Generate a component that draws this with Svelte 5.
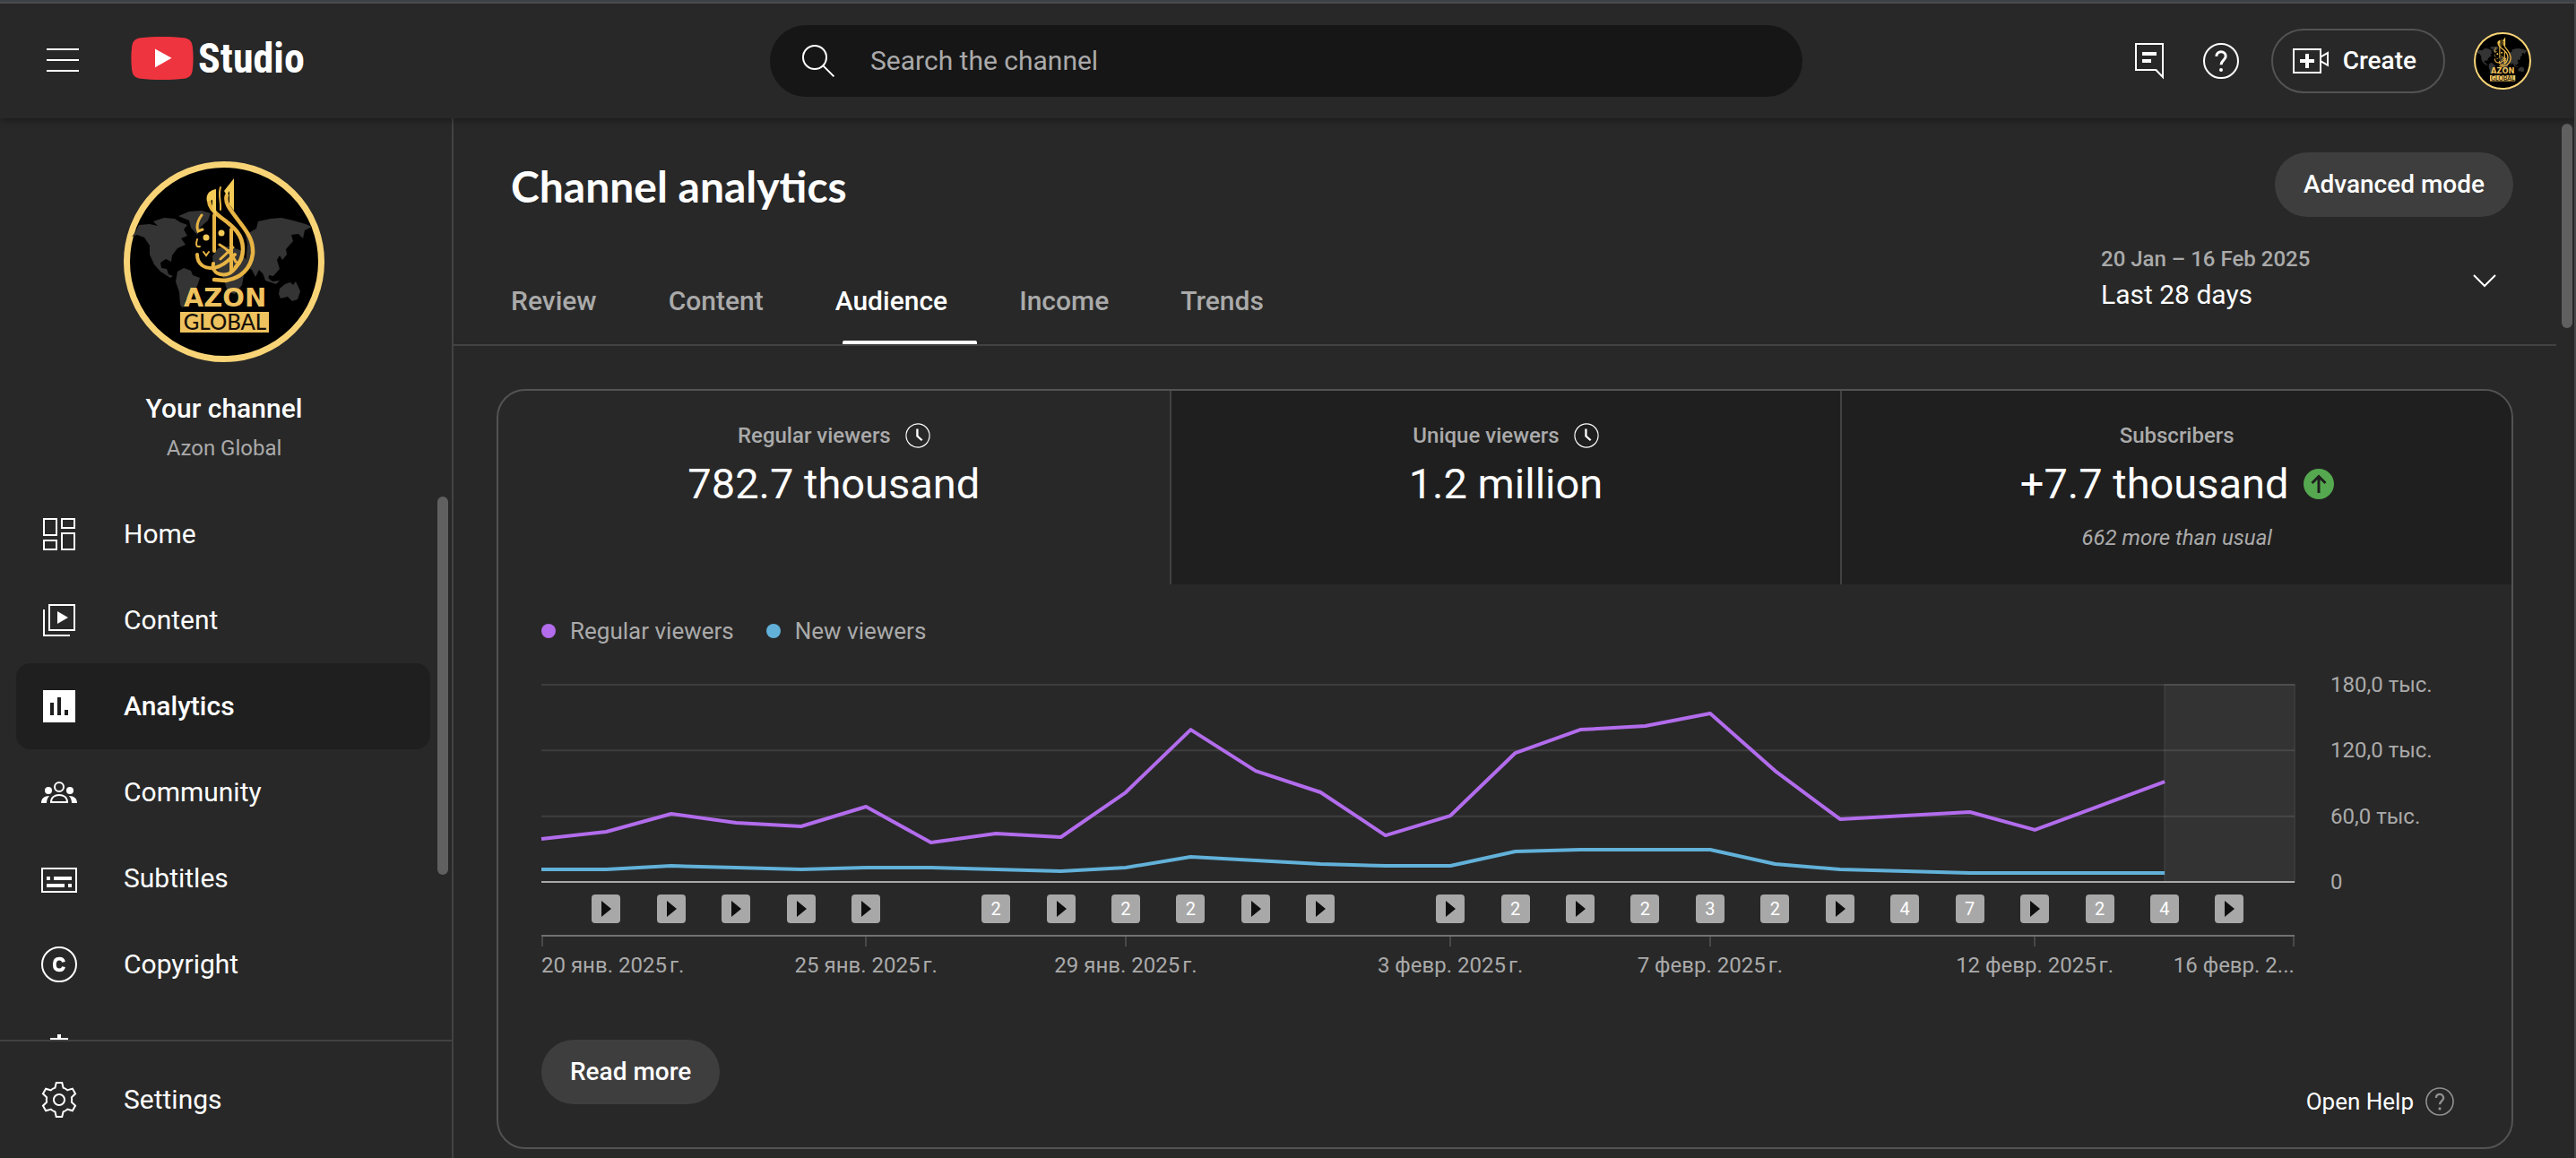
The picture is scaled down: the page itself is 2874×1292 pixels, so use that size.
<script>
  const nav = [
    { id: 'home', label: 'Home' },
    { id: 'content', label: 'Content' },
    { id: 'analytics', label: 'Analytics' },
    { id: 'community', label: 'Community' },
    { id: 'subtitles', label: 'Subtitles' },
    { id: 'copyright', label: 'Copyright' },
    { id: 'earn', label: '' },
  ];

  const tabs = ['Review', 'Content', 'Audience', 'Income', 'Trends'];

  const metrics = [
    { label: 'Regular viewers', value: '782.7 thousand', clock: true },
    { label: 'Unique viewers', value: '1.2 million', clock: true },
    { label: 'Subscribers', value: '+7.7 thousand', up: true, note: '662 more than usual' },
  ];

  // thousands of viewers per day, from 20 January
  const regular = [39.3, 45.8, 62.2, 54, 50.7, 68.7, 36, 44.2, 40.9, 81.8, 139, 101.4, 81.8, 42.5, 60.5, 117.8, 139, 142.4, 153.8, 101.4, 57.3, 60.5, 63.8, 47.5, 69.5, 91.6];
  const fresh = [11.5, 11.5, 14.7, 13.1, 11.5, 13.1, 13.1, 11.5, 9.8, 13.1, 22.9, 19.6, 16.4, 14.7, 14.7, 27.8, 29.5, 29.5, 29.5, 16.4, 11.5, 9.8, 8.2, 8.2, 8.2, 8.2];
  const line = (values) => values.map((v, i) => `${i},${180 - v}`).join(' ');

  // videos published per day
  const uploads = [0, 1, 1, 1, 1, 1, 0, 2, 1, 2, 2, 1, 1, 0, 1, 2, 1, 2, 3, 2, 1, 4, 7, 1, 2, 4, 1, 0];

  const dates = {
    0: '20 янв. 2025\u202Fг.',
    5: '25 янв. 2025\u202Fг.',
    9: '29 янв. 2025\u202Fг.',
    14: '3 февр. 2025\u202Fг.',
    18: '7 февр. 2025\u202Fг.',
    23: '12 февр. 2025\u202Fг.',
    27: '16 февр. 2...',
  };

  const scale = ['180,0 тыс.', '120,0 тыс.', '60,0 тыс.', '0'];
</script>

{#snippet avatar(cls)}
  <svg class={cls} viewBox="0 0 224 224" role="img" aria-label="Azon Global">
    <circle cx="112" cy="112" r="108.5" fill="#000" stroke="#f8d477" stroke-width="7" />
    <g fill="#343434">
      <path d="M13 79l4-8 12-1 9 2-5-5 12-4 12 1 6 4 8 3-4 5 4 7-7 3 5 7-9 4-6 8-1 7-6-3-6 4 1 6 6 1 2 6 5 2-3 2-11-7-7-8-5-11 0-10-6-9-8-3-6 2z" />
      <path d="M61 61l12-5 14-1 10 3-3 8-8 7-4 9-7-8-2-8z" />
      <path d="M60 123l7-4 8 3 2 5 8 3-3 9-6 8-7 7-3 10-3-4-1-14-4-12z" />
      <path d="M105 97l12-2 13 4 6 10 5 2-6 11-3 16-8 10-8-2-4-14-5-9-7-5-1-12z" />
      <path d="M138 92l-2-10 12-7 2-8 14-3 12-1 13 3 14 4 7 3-8 4-2 9-5-5-8 1 2 7-8 9 1 6-5 6-3-5-3 5 3 10-7 8-5-1-1 8-5-9-5-5-4 8-4-8-7-4z" />
      <path d="M155 124l6 6 5 4 8-1-4 4-12-4z" />
      <path d="M174 142l6-5 6-2 3 3 3-4 5 11-3 9-6 2-5-5-8 2-2-5z" />
    </g>
    <g fill="none" stroke="#e8b444" stroke-linecap="round">
      <path stroke-width="4.500" d="M96 40c-3 8 2 15 13 23 14 10 24 19 24 35 0 8-3 15-8 20" />
      <path stroke-width="4.500" d="M115 38c-3 9 5 17 13 28 9 12 17 21 16 37-2 17-14 28-31 30l-12-1" />
      <path stroke-width="4" d="M101 60v40M120 76v46" />
      <path stroke-width="3" d="M87 60c-5 7-6 13-4 18l5-2" />
      <path stroke-width="4" d="M82 104c0 11 8 16 19 15 10-2 16-9 23-15M100 114c-2 10 8 15 18 11 5-3 8-7 10-12" />
      <path stroke-width="3" d="M107 93c8 4 14 11 18 19M108 109l14-13" />
      <path stroke-width="2" d="M82 87c-2 6-1 9 3 8M89 101l3 4 3-4" />
      <path stroke-width="2" d="M108 29c-3 9 1 16 0 25" />
    </g>
    <path fill="#f3cb56" d="M112 33l11-14v36l-5-7V33l-3 5zM93 45c-2-8 3-13 10-14v30l-4-6V43z" />
    <g fill="#f3cb56"><circle cx="92" cy="85" r="3.5" /><circle cx="109" cy="80" r="3.5" /></g>
    <text class="az" x="113" y="162" text-anchor="middle">AZON</text>
    <rect x="63" y="168" width="99" height="23" fill="#eec25e" />
    <text class="gl" x="113" y="188" text-anchor="middle">GLOBAL</text>
  </svg>
{/snippet}

{#snippet icon(id)}
  <svg class="icon" viewBox="0 0 24 24" aria-hidden="true">
    {#if id === 'home'}
      <path class="s" d="M3.500 3.500h7v9h-7zM3.500 15.500h7v5h-7zM13.500 3.500h7v5h-7zM13.500 11.500h7v9h-7z" />
    {:else if id === 'content'}
      <path class="s" d="M6.500 3.500h14v14h-14zM3.500 6v14.500H18" /><path d="M11 7l6 3.500-6 3.500z" />
    {:else if id === 'analytics'}
      <path fill-rule="evenodd" d="M3 3h18v18H3zM7 10v7h2v-7zM11 7v10h2V7zM15 14v3h2v-3z" />
    {:else if id === 'community'}
      <circle class="s" cx="12" cy="9" r="2.500" /><circle cx="6" cy="11" r="2" /><circle cx="18" cy="11" r="2" />
      <path class="s" d="M7.500 17.500c0-2.600 2-4 4.500-4s4.500 1.400 4.500 4z" />
      <path d="M2 18c0-2.500 1.500-4 4.600-4C5.600 15 5 16.300 5 18zM22 18c0-2.500-1.500-4-4.600-4 1 1 1.600 2.300 1.600 4z" />
    {:else if id === 'subtitles'}
      <path class="s" d="M2.500 6.500h19v13h-19z" /><path d="M5 11h2v2H5zM9 11h10v2H9zM5 15h10v2H5zM17 15h2v2h-2z" />
    {:else if id === 'copyright'}
      <circle class="s" cx="12" cy="12" r="9.500" />
      <path fill="none" stroke="#fff" stroke-width="1.900" d="M14.500 10.700c-.2-1.200-1.100-1.900-2.400-1.900-1.700 0-2.700 1.200-2.700 3.200s1 3.200 2.700 3.200c1.300 0 2.200-.7 2.400-1.900" />
    {:else if id === 'earn'}
      <path d="M11 3h2v2h4v2H9v4h8v8h-4v2h-2v-2H7v-2h8v-4H7V5h4z" />
    {:else if id === 'settings'}
      <path d="M12 9.500c1.380 0 2.500 1.120 2.500 2.500s-1.120 2.500-2.500 2.500-2.500-1.120-2.500-2.500 1.120-2.500 2.500-2.500m0-1c-1.930 0-3.500 1.570-3.500 3.500s1.570 3.500 3.500 3.500 3.500-1.570 3.500-3.500-1.570-3.500-3.500-3.500zM13.220 3l.55 2.200.13.51.5.18c.61.23 1.190.56 1.720.98l.4.32.5-.14 2.170-.62 1.220 2.110-1.630 1.590-.37.36.08.51c.05.32.08.64.08.98s-.03.66-.08.98l-.08.51.37.36 1.630 1.590-1.220 2.110-2.170-.62-.5-.14-.4.32c-.53.43-1.110.76-1.720.98l-.5.18-.13.51-.55 2.240h-2.440l-.55-2.200-.13-.51-.5-.18c-.6-.23-1.180-.56-1.720-.99l-.4-.32-.5.14-2.170.62-1.210-2.120 1.630-1.590.37-.36-.08-.51c-.05-.32-.08-.65-.08-.98s.03-.66.08-.98l.08-.51-.37-.36L3.600 8.560l1.220-2.110 2.170.62.5.14.4-.32c.53-.44 1.110-.77 1.720-.99l.5-.18.13-.51.54-2.210h2.440M14 2h-4l-.74 2.960c-.73.27-1.400.66-2 1.140l-2.920-.83-2 3.460 2.190 2.130c-.06.37-.09.75-.09 1.140s.03.77.09 1.140l-2.190 2.130 2 3.460 2.920-.83c.6.48 1.270.87 2 1.140L10 22h4l.74-2.960c.73-.27 1.400-.66 2-1.140l2.920.83 2-3.460-2.190-2.130c.06-.37.09-.75.09-1.140s-.03-.77-.09-1.140l2.190-2.130-2-3.460-2.920.83c-.6-.48-1.270-.87-2-1.140L14 2z" />
    {:else if id === 'menu'}
      <path d="M3 5h18v1H3zM3 11h18v1H3zM3 17h18v1H3z" />
    {:else if id === 'search'}
      <circle class="s" cx="10" cy="10" r="6.500" /><path class="s" d="M14.700 14.700l6 6" />
    {:else if id === 'comment'}
      <path class="s" d="M4.500 2.500h15v18.500l-3.800-4H4.500z" /><path d="M8 7h8v2H8zM8 11h5v2H8z" />
    {:else if id === 'help'}
      <circle class="s" cx="12" cy="12" r="9.500" />
      <path fill="none" stroke="currentColor" stroke-width="1.500" d="M9.400 9.400c.1-1.500 1.200-2.500 2.600-2.500s2.600 1 2.600 2.500c0 2.100-2.500 2.300-2.600 4.700" />
      <circle cx="12" cy="17" r="1" />
    {:else if id === 'create'}
      <path class="s" d="M2.500 5.500h15v13h-15zM17.500 9.800l4-2.300v6.900l-4-2.300" /><path d="M9 8h2v3h3v2h-3v3H9v-3H6v-2h3z" />
    {:else if id === 'chevron'}
      <path class="s" d="M6 9l6 6 6-6" />
    {:else if id === 'clock'}
      <circle class="s" cx="12" cy="12" r="11.200" /><path fill="none" stroke="#fff" stroke-width="2" d="M11.500 5.500v7l4.500 4" />
    {/if}
  </svg>
{/snippet}

<div class="app">
  <header class="top">
    <div class="brand">
      <button class="plain" aria-label="Collapse menu">{@render icon('menu')}</button>
      <a class="logo" href="#studio">
        <svg class="mark" viewBox="0 0 70 48" aria-hidden="true">
          <path fill="#ee343f" d="M11 1.200C24-.4 46-.4 59 1.200c6 .7 9 3.500 9.800 9.500 1.100 8.600 1.100 18 0 26.600-.8 6-3.800 8.800-9.800 9.500-13 1.600-35 1.600-48 0-6-.7-9-3.500-9.800-9.500-1.100-8.600-1.100-18 0-26.600C2 4.700 5 1.900 11 1.200z" />
          <path fill="#fff" d="M27 13.500l18.500 10.300L27 34.200z" />
        </svg>
        <span>Studio</span>
      </a>
    </div>
    <label class="search">
      {@render icon('search')}
      <input type="search" placeholder="Search the channel" aria-label="Search the channel" />
    </label>
    <div class="actions">
      <button class="plain" aria-label="Feedback">{@render icon('comment')}</button>
      <button class="plain" aria-label="Help">{@render icon('help')}</button>
      <button class="create">{@render icon('create')}<span>Create</span></button>
      <button class="plain account" aria-label="Account">{@render avatar('small')}</button>
    </div>
  </header>

  <div class="body">
    <aside class="side">
      <div class="channel">
        {@render avatar('big')}
        <strong>Your channel</strong>
        <span>Azon Global</span>
      </div>
      <div class="scroller">
        <nav>
          {#each nav as item}
            <a class="item" class:active={item.id === 'analytics'} href="#{item.id}" aria-label={item.label || 'Earn'}>
              {@render icon(item.id)}<span>{item.label}</span>
            </a>
          {/each}
        </nav>
        <div class="thumb"></div>
      </div>
      <div class="bottom">
        <a class="item" href="#settings">{@render icon('settings')}<span>Settings</span></a>
      </div>
    </aside>

    <main>
      <section class="head">
        <div class="title">
          <h1>Channel analytics</h1>
          <button class="pill">Advanced mode</button>
        </div>
        <div class="bar">
          <nav class="tabs">
            {#each tabs as tab}
              <a class="tab" class:current={tab === 'Audience'} href="#{tab.toLowerCase()}">{tab}</a>
            {/each}
          </nav>
          <button class="period">
            <span class="range"><small>20 Jan – 16 Feb 2025</small><span>Last 28 days</span></span>
            {@render icon('chevron')}
          </button>
        </div>
      </section>

      <section class="card">
        <div class="metrics">
          {#each metrics as m, i}
            <button class="metric" class:selected={i === 0}>
              <span class="label">{m.label}{#if m.clock}{@render icon('clock')}{/if}</span>
              <span class="value">
                {m.value}
                {#if m.up}
                  <svg class="up" viewBox="0 0 34 34" aria-hidden="true">
                    <circle cx="17" cy="17" r="17" fill="#55a84f" />
                    <path fill="none" stroke="#1f1f1f" stroke-width="3" d="M17 27V9M9.500 16L17 8.500l7.500 7.500" />
                  </svg>
                {/if}
              </span>
              {#if m.note}<em>{m.note}</em>{/if}
            </button>
          {/each}
        </div>

        <div class="legend">
          <span class="key regular">Regular viewers</span>
          <span class="key fresh">New viewers</span>
        </div>

        <div class="chart">
          <svg class="plot" viewBox="0 0 27 180" preserveAspectRatio="none" role="img" aria-label="Viewers per day">
            <rect class="pending" x="25" y="0" width="2" height="180" />
            <path class="grid" d="M0 0H27M0 60H27M0 120H27" />
            <polyline class="regular" points={line(regular)} />
            <polyline class="fresh" points={line(fresh)} />
            <path class="base" d="M0 180H27" />
          </svg>
          <div class="scale">
            {#each scale as s}<span>{s}</span>{/each}
          </div>
          <div class="uploads">
            {#each uploads as n}
              <span class="mark-day" class:none={n === 0}>
                {#if n === 1}
                  <svg viewBox="0 0 32 32" role="img" aria-label="Video"><path d="M11 7l11 9-11 9z" /></svg>
                {:else if n > 1}{n}{/if}
              </span>
            {/each}
          </div>
          <div class="dates">
            {#each uploads as _, i}
              <span class="date">{#if dates[i]}<i></i><span>{dates[i]}</span>{/if}</span>
            {/each}
          </div>
        </div>

        <div class="foot">
          <button class="pill">Read more</button>
          <a class="help" href="#help">Open Help {@render icon('help')}</a>
        </div>
      </section>
      <div class="thumb page"></div>
    </main>
  </div>
</div>

<style>
  :global(body) { background: #282828; }
  .app {
    height: 100vh;
    box-sizing: border-box;
    display: flex;
    flex-direction: column;
    overflow: hidden;
    background: #282828;
    color: #fff;
    border-top: 2px solid #3c4149;
    border-right: 2px solid #48484a;
    font: 400 30px/40px Roboto, "Noto Sans", sans-serif;
  }
  button { border: 0; padding: 0; margin: 0; background: none; color: inherit; font: inherit; cursor: pointer; }
  a { color: inherit; text-decoration: none; }
  svg { display: block; flex: none; }
  .icon { width: 48px; height: 48px; fill: currentColor; }
  .s { fill: none; stroke: currentColor; stroke-width: 1; }
  .az { font: 700 29px "DejaVu Sans", sans-serif; fill: #efc25f; }
  .gl { font: 500 24px Lato, sans-serif; fill: #17100a; }

  .top {
    position: relative;
    z-index: 1;
    flex: none;
    box-sizing: border-box;
    height: 130px;
    padding: 0 48px 0 46px;
    border-top: 2px solid #4a4a4c;
    display: grid;
    grid-template-columns: 1fr minmax(0, 1152px) 1fr;
    align-items: center;
    box-shadow: 0 2px 8px rgba(0, 0, 0, 0.35);
    background: #282828;
  }
  .brand { display: flex; align-items: center; gap: 52px; }
  .logo { display: flex; align-items: center; gap: 5px; padding-bottom: 6px; font: 700 46px/48px "Liberation Sans Narrow", "Roboto Condensed", Roboto, sans-serif; }
  .mark { width: 70px; height: 48px; }
  .search {
    box-sizing: border-box;
    height: 80px;
    border-radius: 40px;
    padding: 0 40px 0 30px;
    display: flex;
    align-items: center;
    gap: 34px;
    background: #161616;
  }
  input { flex: 1; min-width: 0; border: 0; padding: 0; outline: 0; background: none; color: #fff; font: inherit; }
  input::placeholder { color: #aaa; opacity: 1; }
  .actions { display: flex; align-items: center; justify-content: flex-end; gap: 32px; }
  .create {
    box-sizing: border-box;
    height: 72px;
    padding: 0 30px 0 18px;
    border: 2px solid #535353;
    border-radius: 36px;
    display: flex;
    align-items: center;
    gap: 12px;
    font-size: 28px;
    font-weight: 500;
  }
  .small { width: 64px; height: 64px; }

  .body { flex: 1; min-height: 0; display: flex; }
  .side {
    flex: none;
    box-sizing: border-box;
    width: 506px;
    border-right: 2px solid #424242;
    display: flex;
    flex-direction: column;
  }
  .channel { padding: 48px 4px 28px 0; display: flex; flex-direction: column; align-items: center; }
  .big { width: 224px; height: 224px; }
  .channel strong { margin-top: 32px; font-weight: 500; }
  .channel span { margin-top: 4px; color: #aaa; font-size: 24px; }
  .scroller { position: relative; flex: 1; min-height: 0; overflow: hidden; }
  .scroller nav { padding-right: 24px; }
  .item { display: flex; align-items: center; gap: 48px; height: 96px; margin-left: 18px; padding-left: 24px; border-radius: 16px; }
  .item.active { background: #1f1f1f; font-weight: 500; }
  .thumb { position: absolute; top: 6px; right: 4px; width: 12px; height: 422px; border-radius: 6px; background: #606060; }
  .bottom { flex: none; height: 130px; border-top: 2px solid #424242; display: flex; align-items: center; }

  main { position: relative; flex: 1; min-width: 0; }
  .head { box-sizing: border-box; margin-right: 20px; padding: 38px 48px 0 64px; border-bottom: 2px solid #424242; }
  .title { display: flex; align-items: center; justify-content: space-between; }
  h1 { margin: 0; padding-top: 4px; font: 700 48px/64px Lato, "Open Sans", sans-serif; }
  .pill { height: 72px; padding: 0 32px; border-radius: 36px; background: #3e3e3e; font-size: 28px; font-weight: 500; }
  .bar { height: 142px; display: flex; justify-content: space-between; }
  .tabs { align-self: flex-end; display: flex; gap: 80px; }
  .tab { position: relative; height: 98px; line-height: 100px; font-weight: 500; color: #aaa; }
  .current { color: #fff; }
  .current::after { content: ""; position: absolute; left: 8px; bottom: 0; width: 150px; height: 4px; border-radius: 2px 2px 0 0; background: #fff; }
  .period { width: 460px; height: 142px; padding-right: 8px; display: flex; align-items: center; justify-content: space-between; text-align: left; }
  .range { display: flex; flex-direction: column; padding-bottom: 8px; }
  small { font-size: 24px; font-weight: 500; color: #aaa; }
  .page { right: 2px; top: 6px; height: 228px; }

  .card { box-sizing: border-box; margin: 48px 68px 0 48px; border: 2px solid #535353; border-radius: 32px; overflow: hidden; }
  .metrics { display: grid; grid-template-columns: repeat(3, 1fr); }
  .metric {
    box-sizing: border-box;
    height: 216px;
    padding-top: 30px;
    display: flex;
    flex-direction: column;
    align-items: center;
    background: #1f1f1f;
    border-left: 2px solid #424242;
  }
  .metric.selected { background: none; border-left: 0; }
  .label { display: flex; align-items: center; gap: 16px; color: #aaa; font-size: 24px; font-weight: 500; }
  .label :global(.icon) { width: 28px; height: 28px; color: #fff; }
  .value { display: flex; align-items: center; gap: 16px; font-size: 47px; line-height: 68px; }
  .up { width: 34px; height: 34px; }
  em { margin-top: 10px; color: #aaa; font-size: 24px; line-height: 32px; }

  .legend { display: flex; gap: 36px; padding: 36px 48px 44px; color: #aaa; font-size: 26px; line-height: 32px; }
  .key { display: flex; align-items: center; gap: 16px; }
  .key::before { content: ""; width: 16px; height: 16px; border-radius: 8px; background: #62b1d9; }
  .key.regular::before { background: #b26cec; }

  .chart { display: grid; grid-template-columns: minmax(0, 1fr) 202px; column-gap: 40px; padding-left: 48px; color: #aaa; font-size: 24px; line-height: 24px; }
  .plot { width: 100%; height: 220px; overflow: visible; }
  .plot * { vector-effect: non-scaling-stroke; fill: none; }
  .plot .pending { fill: #333; stroke: #3a3a3a; stroke-width: 2; }
  .grid { stroke: #fff; stroke-opacity: 0.1; stroke-width: 2; }
  .base { stroke: #a8a8a8; stroke-width: 2; }
  polyline { stroke-width: 4; stroke-linejoin: round; }
  polyline.regular { stroke: #b26cec; }
  polyline.fresh { stroke: #62b1d9; }
  .scale { display: flex; flex-direction: column; justify-content: space-between; }
  .scale span { height: 0; line-height: 0; }
  .uploads { grid-column: 1; display: flex; justify-content: space-between; margin: 14px -16px 0; }
  .mark-day { width: 32px; height: 32px; border-radius: 4px; background: #a8a8a8; color: #fff; font-size: 20px; line-height: 32px; text-align: center; }
  .mark-day.none { background: none; }
  .mark-day path { fill: #0f0f0f; }
  .dates { grid-column: 1; display: flex; justify-content: space-between; margin-top: 13px; border-top: 2px solid #717171; }
  .date { width: 0; display: flex; flex-direction: column; align-items: center; white-space: nowrap; }
  .date:first-child { align-items: flex-start; }
  .date:last-child { align-items: flex-end; }
  i { width: 2px; height: 11px; margin-bottom: 9px; background: #484848; }

  .foot { display: flex; justify-content: space-between; align-items: flex-end; padding: 71px 61px 32px 48px; }
  .foot .pill { margin-bottom: 16px; }
  .help { display: flex; align-items: center; gap: 10px; font-size: 26px; line-height: 38px; }
  .help :global(.icon) { width: 38px; height: 38px; color: #909090; }
</style>
